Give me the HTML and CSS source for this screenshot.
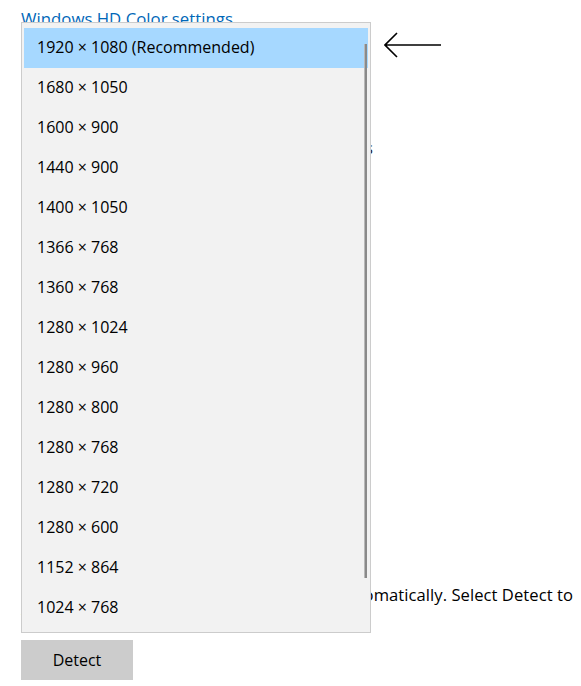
FILE: index.html
```html
<!DOCTYPE html>
<html lang="en">
<head>
    <meta charset="UTF-8">
    <title>Display resolution</title>
    <link rel="stylesheet" href="styles.css">
</head>
<body>
    <div class="page">
        <a href="#" class="link">Windows HD Color settings</a>

        <div class="hidden-line">Change the size of text, apps, and other items</div>

        <p class="note">Older displays might not always connect automatically. Select Detect to try to connect to them.</p>

        <button class="detect">Detect</button>

        <!-- resolution dropdown open over the page -->
        <ul class="dropdown">
            <li class="selected">1920 × 1080 (Recommended)</li>
            <li>1680 × 1050</li>
            <li>1600 × 900</li>
            <li>1440 × 900</li>
            <li>1400 × 1050</li>
            <li>1366 × 768</li>
            <li>1360 × 768</li>
            <li>1280 × 1024</li>
            <li>1280 × 960</li>
            <li>1280 × 800</li>
            <li>1280 × 768</li>
            <li>1280 × 720</li>
            <li>1280 × 600</li>
            <li>1152 × 864</li>
            <li>1024 × 768</li>
            <span class="thumb"></span>
        </ul>

        <svg class="arrow" width="60" height="30" viewBox="0 0 60 30">
            <path d="M1 15 H57 M13 3 L1 15 L13 27" fill="none" stroke="#000" stroke-width="1.6"/>
        </svg>
    </div>
</body>
</html>
```

FILE: styles.css
```css
body {
    margin: 0;
    background: #fff;
    font-family: 'Open Sans', 'Noto Sans', sans-serif;
    font-size: 16px;
    color: #000;
    overflow: hidden;
}
.page {
    position: relative;
    padding: 8px 0 0 21px;
    width: 560px;
    height: 678px;
}
.link {
    display: block;
    color: #0067b8;
    text-decoration: none;
    font-size: 16.8px;
    line-height: 22px;
}
.hidden-line {
    width: 352px;
    margin-top: 107px;
    text-align: right;
    white-space: nowrap;
    overflow: hidden;
    line-height: 22px;
    color: #222;
}
.note {
    margin: 425px 0 0;
    line-height: 22px;
    font-size: 16.6px;
    letter-spacing: 0.05px;
}
.detect {
    display: block;
    margin-top: 12px;
    width: 112px;
    height: 40px;
    border: none;
    background: #cccccc;
    font-family: inherit;
    font-size: 16px;
    color: #000;
    padding: 0;
}
.dropdown {
    position: absolute;
    left: 21px;
    top: 22px;
    width: 344px;
    margin: 0;
    padding: 5px 2px 4px 2px;
    list-style: none;
    background: #f2f2f2;
    border: 1px solid #cccccc;
}
.dropdown li {
    height: 40px;
    line-height: 39px;
    padding-left: 13px;
}
.dropdown li.selected {
    background: #a6d8ff;
}
.thumb {
    position: absolute;
    right: 3px;
    top: 21px;
    width: 2px;
    height: 534px;
    background: #8a8a8a;
    border-left: 1px solid #b8b8b8;
}
.arrow {
    position: absolute;
    left: 384px;
    top: 30px;
}
```
